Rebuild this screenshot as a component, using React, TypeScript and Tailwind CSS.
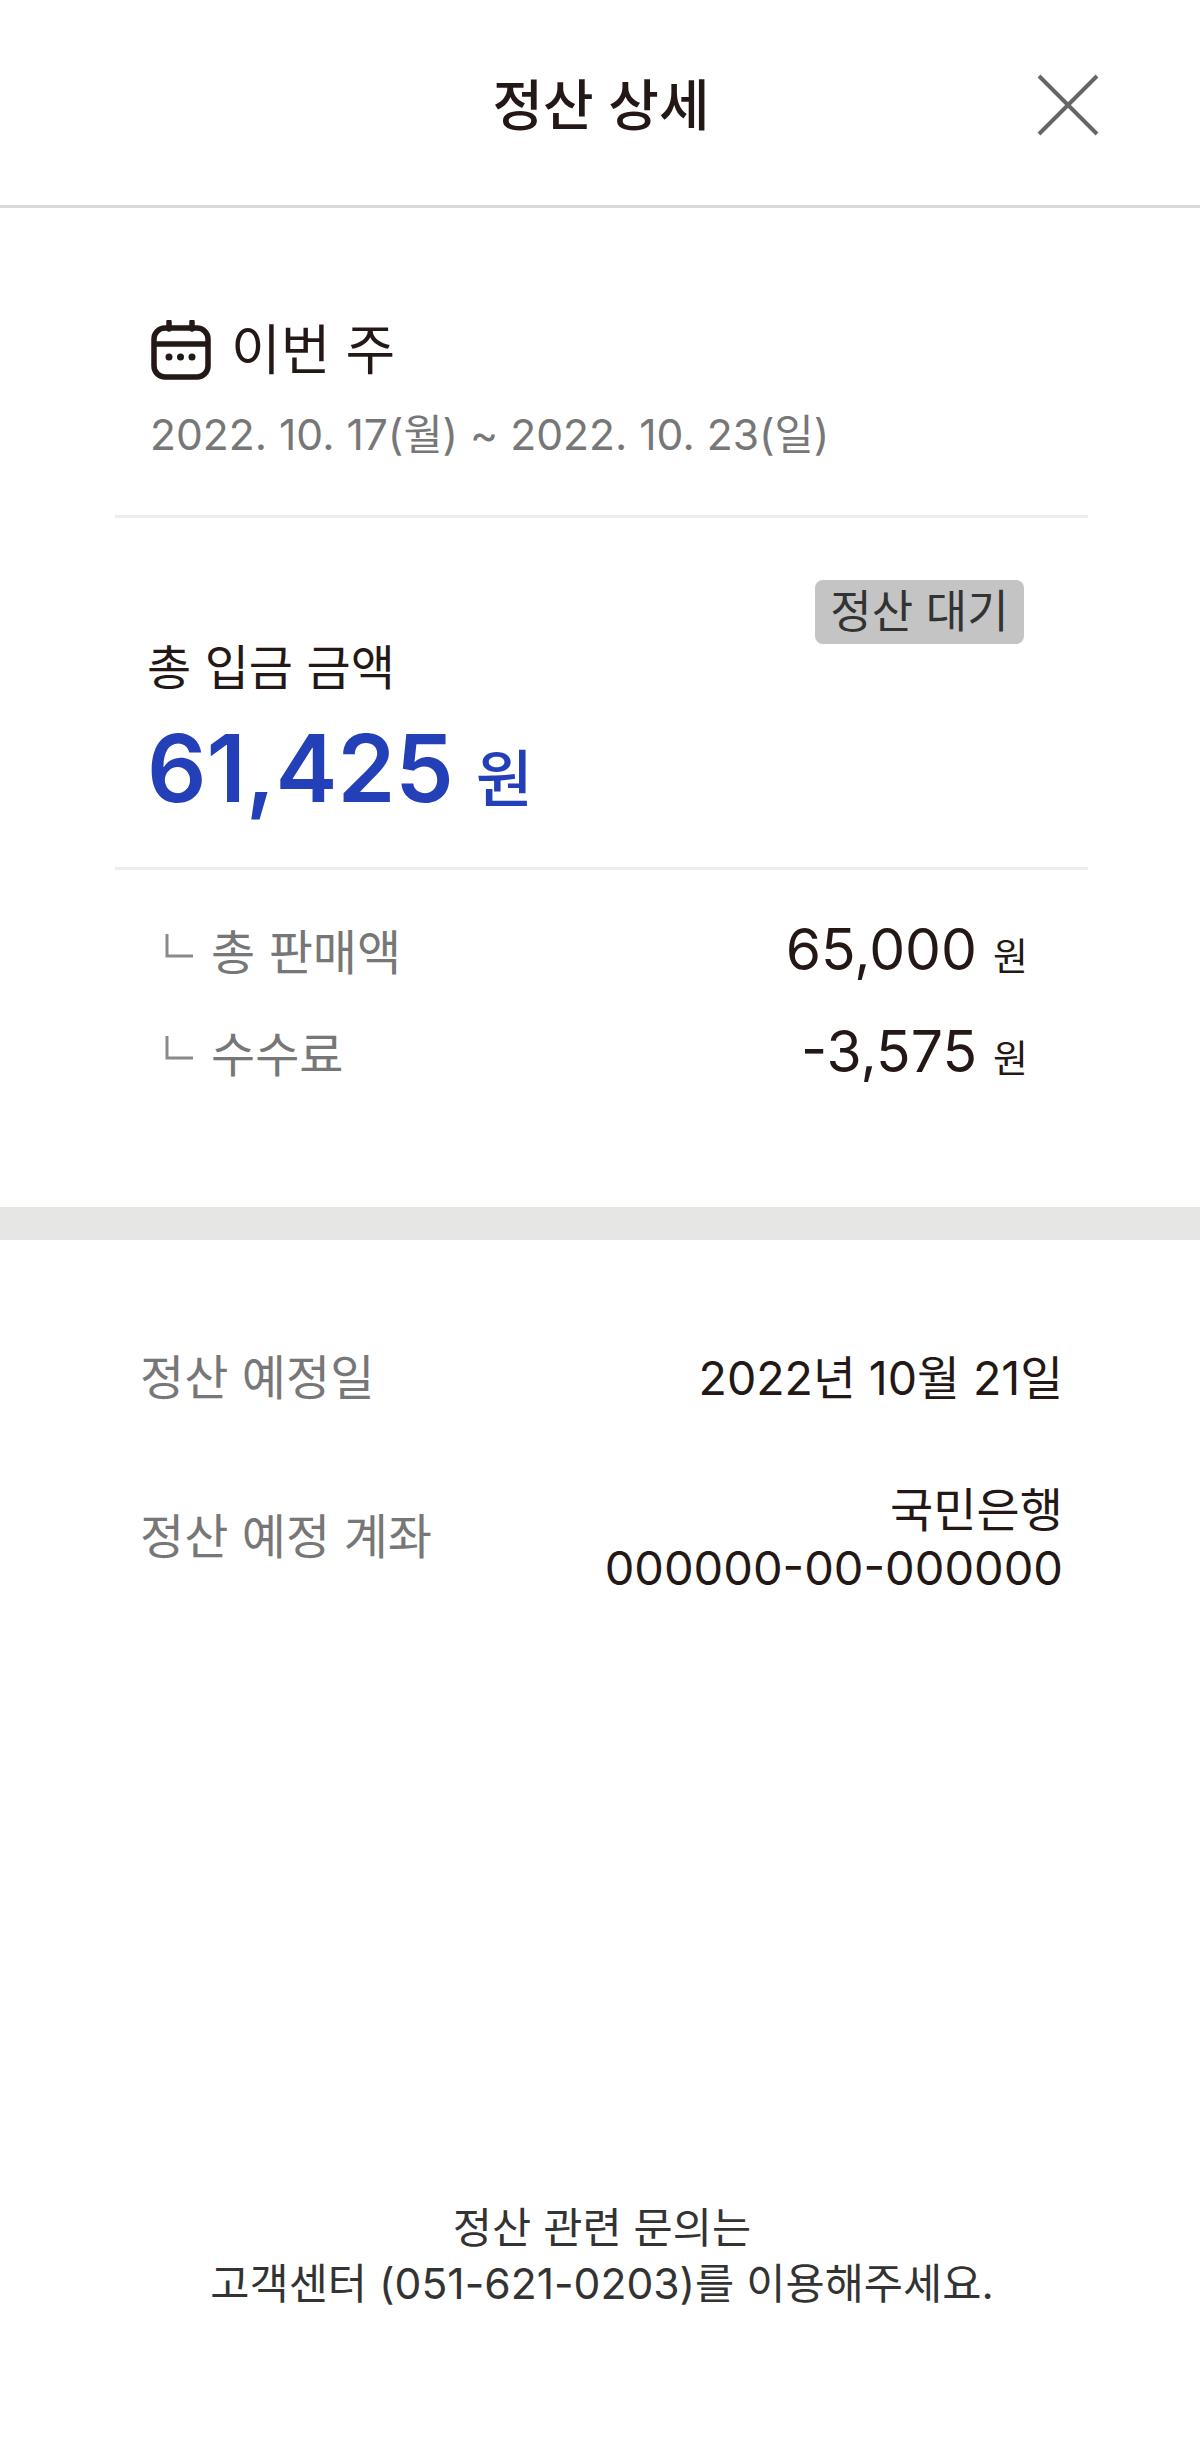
import React from 'react'

const font = { fontFamily: 'Inter, "Noto Sans CJK KR", sans-serif' }

function CalendarIcon() {
    return (
        <svg width="60" height="60" viewBox="0 0 60 60" fill="none" stroke="#231815" strokeWidth="5.5">
            <rect x="3" y="8" width="54" height="49" rx="11" />
            <path d="M3 24H57" />
            <path d="M18 2V9M41 2V9" strokeLinecap="round" />
            <circle cx="18" cy="37" r="3.5" fill="#231815" stroke="none" />
            <circle cx="29.5" cy="37" r="3.5" fill="#231815" stroke="none" />
            <circle cx="41" cy="37" r="3.5" fill="#231815" stroke="none" />
        </svg>
    )
}

function CornerMark() {
    return (
        <svg width="28" height="30" viewBox="0 0 28 30" fill="none" stroke="#8a8a8a" strokeWidth="3">
            <path d="M2 2V24H28" />
        </svg>
    )
}

function AmountRow({ label, value, className }: { label: string, value: string, className: string }) {
    return (
        <div className={`flex items-center justify-between ${className}`}>
            <div className="flex items-center">
                <div className="w-[48px] -mt-[12px] pl-[2px]"><CornerMark /></div>
                <span className="text-[48px] leading-[64px] text-[#777]">{label}</span>
            </div>
            <div className="flex items-baseline text-[#231815]">
                <span className="text-[57px] leading-[64px]">{value}</span>
                <span className="text-[38px] leading-[64px] ml-[16px]">원</span>
            </div>
        </div>
    )
}

export default function App() {
    return (
        <div className="w-[1200px] h-[2442px] bg-white flex flex-col" style={font}>
            {/* header */}
            <div className="relative h-[208px] shrink-0 flex items-center justify-center border-b-[3px] border-[#d9d9d9]">
                <p className="text-[55px] font-medium text-[#231815] mt-[6px] ml-[2px]">정산 상세</p>
                <svg className="absolute left-[1037px] top-[74px]" width="62" height="62" viewBox="0 0 62 62" fill="none" stroke="#666" strokeWidth="4">
                    <path d="M2 2L60 60M60 2L2 60" />
                </svg>
            </div>

            {/* this week */}
            <div className="px-[115px] pt-[110px]">
                <div className="pl-[36px] pb-[50px] border-b-[3px] border-[#eeeeee] w-[973px]">
                    <div className="flex items-center h-[64px]">
                        <CalendarIcon />
                        <span className="ml-[20px] text-[54px] text-[#231815]">이번 주</span>
                    </div>
                    <p className="mt-[23px] -ml-[1px] text-[42.6px] leading-[60px] text-[#777]">2022. 10. 17(월) ~ 2022. 10. 23(일)</p>
                </div>

                {/* total */}
                <div className="relative h-[352px] w-[973px] pl-[32px] pt-[118px] border-b-[3px] border-[#eeeeee]">
                    <span className="absolute right-[64px] top-[62px] w-[209px] h-[64px] rounded-[8px] bg-[#c4c4c4] flex items-center justify-center text-[45px] text-[#333]">정산 대기</span>
                    <p className="text-[48px] leading-[64px] text-[#231815]">총 입금 금액</p>
                    <div className="flex items-baseline text-[#2340b8] mt-[13px]">
                        <span className="text-[93px] leading-[110px] font-semibold">61,425</span>
                        <span className="ml-[22px] text-[62px] font-medium">원</span>
                    </div>
                </div>

                <div className="w-[973px] pl-[48px] pr-[60px] pt-[48px]">
                    <AmountRow label="총 판매액" value="65,000" className="" />
                    <AmountRow label="수수료" value="-3,575" className="mt-[32px]" />
                </div>
            </div>

            <div className="h-[33px] bg-[#e6e6e4] mt-[117px] shrink-0" />

            {/* schedule */}
            <div className="pl-[140px] pr-[137px] pt-[106px] text-[48px]">
                <div className="flex items-center justify-between">
                    <span className="text-[#777] leading-[64px]">정산 예정일</span>
                    <span className="text-[#231815] text-[46.5px] leading-[64px]">2022년 10월 21일</span>
                </div>
                <div className="flex items-center justify-between mt-[67px]">
                    <span className="text-[#777]">정산 예정 계좌</span>
                    <div className="text-right text-[#231815] text-[47px] leading-[58px] pt-[4px]">
                        <p>국민은행</p>
                        <p>000000-00-000000</p>
                    </div>
                </div>
            </div>

            {/* footer */}
            <div className="mt-auto pb-[130px] pl-[4px] text-center text-[42.6px] leading-[56px] text-[#333]">
                <p>정산 관련 문의는</p>
                <p>고객센터 (051-621-0203)를 이용해주세요.</p>
            </div>
        </div>
    )
}
